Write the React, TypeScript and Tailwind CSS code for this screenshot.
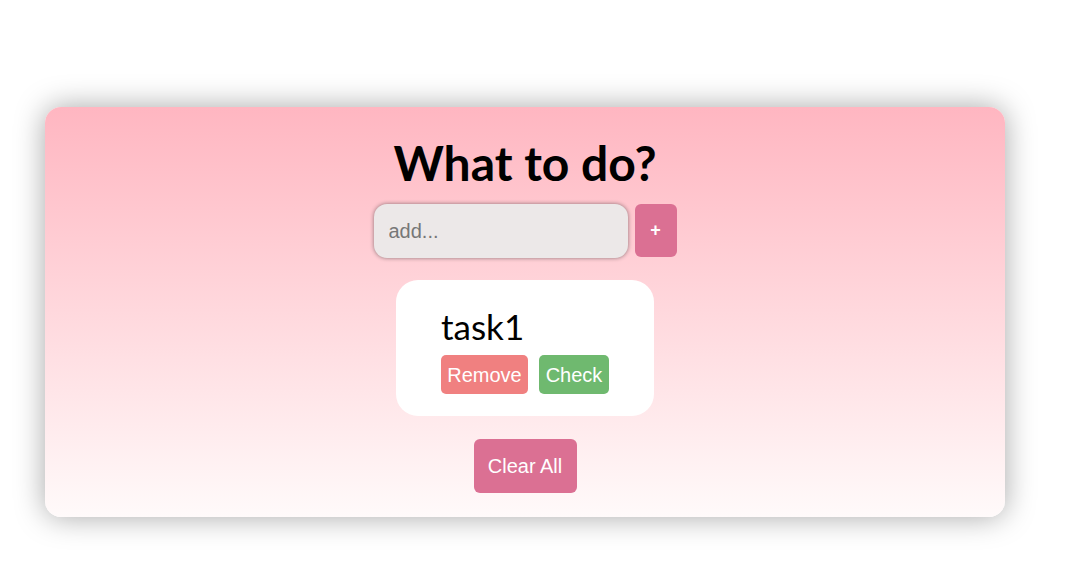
export default function App() {
  return (
    <div className="min-h-[581px] w-full bg-white pt-[107px] pl-[45px]">
      <div className="flex w-[960px] h-[410px] flex-col items-center rounded-[16px] bg-gradient-to-b from-[#ffb6c1] to-[#fffafa] pt-[30px] shadow-[0_0_30px_rgba(0,0,0,0.35)]">
        <h1 className="font-['Lato',sans-serif] text-[48px] font-bold leading-[52px] text-black">What to do?</h1>
        <div className="mt-[15px] flex items-stretch gap-[7px]">
          <input
            className="h-[54px] w-[254px] rounded-[13px] bg-[#ece8e8] px-[15px] font-['Liberation_Sans',sans-serif] text-[20px] text-black placeholder:text-[#777] shadow-[0_0_4px_rgba(0,0,0,0.45)] outline-none"
            placeholder="add..."
          />
          <button className="h-[53px] w-[42px] rounded-[6px] bg-[#db7093] font-['Liberation_Sans',sans-serif] text-[18px] font-bold text-white">+</button>
        </div>
        <div className="mt-[22px] flex w-[258px] h-[136px] flex-col rounded-[22px] bg-white pl-[45px] pt-[24px]">
          <div className="font-['Lato',sans-serif] text-[35px] leading-[44px] text-black">task1</div>
          <div className="mt-[7px] flex gap-[11px]">
            <button className="h-[39px] w-[87px] rounded-[5px] bg-[#f08080] font-['Liberation_Sans',sans-serif] text-[20px] text-white">Remove</button>
            <button className="h-[39px] w-[70px] rounded-[5px] bg-[#6fb96f] font-['Liberation_Sans',sans-serif] text-[20px] text-white">Check</button>
          </div>
        </div>
        <button className="mt-[23px] h-[54px] w-[103px] rounded-[6px] bg-[#db7093] font-['Liberation_Sans',sans-serif] text-[20px] text-white">Clear All</button>
      </div>
    </div>
  );
}
